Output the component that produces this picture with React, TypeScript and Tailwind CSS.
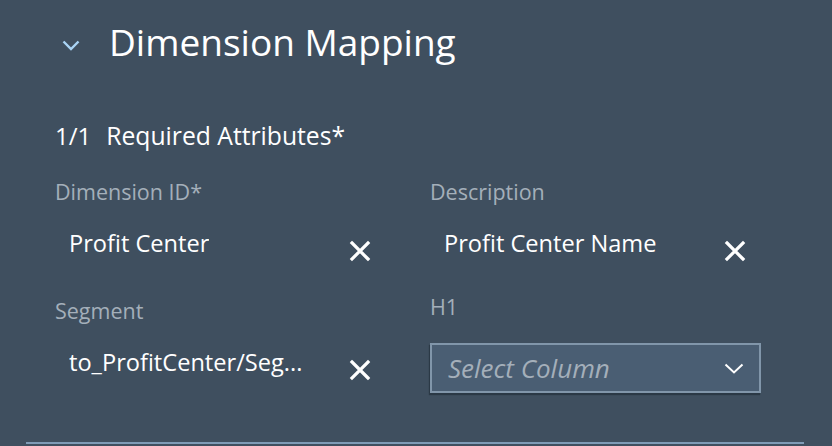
import React from "react";

function ClearIcon() {
  return (
    <svg width="22" height="22" viewBox="0 0 22 22" className="shrink-0 mt-[14px]">
      <path d="M3 3 L19 19 M19 3 L3 19" stroke="#ffffff" strokeWidth="3.2" strokeLinecap="square" />
    </svg>
  );
}

function ValueField({ label, value }: { label: string; value: string }) {
  return (
    <div className="w-[331px]">
      <div className="text-[21.5px] leading-[26px] text-[#a4afba]">{label}</div>
      <div className="flex items-center justify-between pl-[14px] pr-[15px] h-[50px] mt-[14px]">
        <span className="text-[23.6px] text-white truncate">{value}</span>
        <ClearIcon />
      </div>
    </div>
  );
}

export default function App() {
  return (
    <div className="w-[832px] h-[446px] bg-[#3f4f5f] font-['Open_Sans',sans-serif] flex flex-col overflow-hidden">
      <div className="flex items-center pl-[62px] pt-[22px] h-[62px]">
        <svg width="18" height="11" viewBox="0 0 18 11" className="mt-[6px]">
          <path d="M1.5 1.5 L9 9 L16.5 1.5" fill="none" stroke="#a9d4f5" strokeWidth="2.4" />
        </svg>
        <h2 className="ml-[29px] text-[37px] leading-[40px] text-white">Dimension Mapping</h2>
      </div>

      <div className="flex items-baseline pl-[55px] mt-[55px] text-white">
        <span className="text-[24px]">1/1</span>
        <span className="ml-[15px] text-[24.7px]">Required Attributes*</span>
      </div>

      <div className="grid grid-cols-[375px_375px] gap-y-[29px] pl-[55px] mt-[25px]">
        <ValueField label="Dimension ID*" value="Profit Center" />
        <ValueField label="Description" value="Profit Center Name" />
        <ValueField label="Segment" value="to_ProfitCenter/Seg..." />
        <div className="w-[331px]">
          <div className="text-[21.5px] leading-[26px] text-[#a4afba] -mt-[4px]">H1</div>
          <div className="flex items-center justify-between h-[50px] mt-[23px] pl-[16px] pr-[15px] border-2 border-[#8196aa] bg-[#4a5e73] shadow-[-1px_2px_1px_rgba(20,30,40,0.45)]">
            <span className="text-[26px] italic text-[#a4afba]">Select Column</span>
            <svg width="20" height="11" viewBox="0 0 20 11">
              <path d="M1.5 1.5 L10 9.5 L18.5 1.5" fill="none" stroke="#ffffff" strokeWidth="2" />
            </svg>
          </div>
        </div>
      </div>

      <div className="mt-auto mb-[2px] ml-[26px] w-[778px] h-[2px] bg-[#7f9bb6]" />
    </div>
  );
}
